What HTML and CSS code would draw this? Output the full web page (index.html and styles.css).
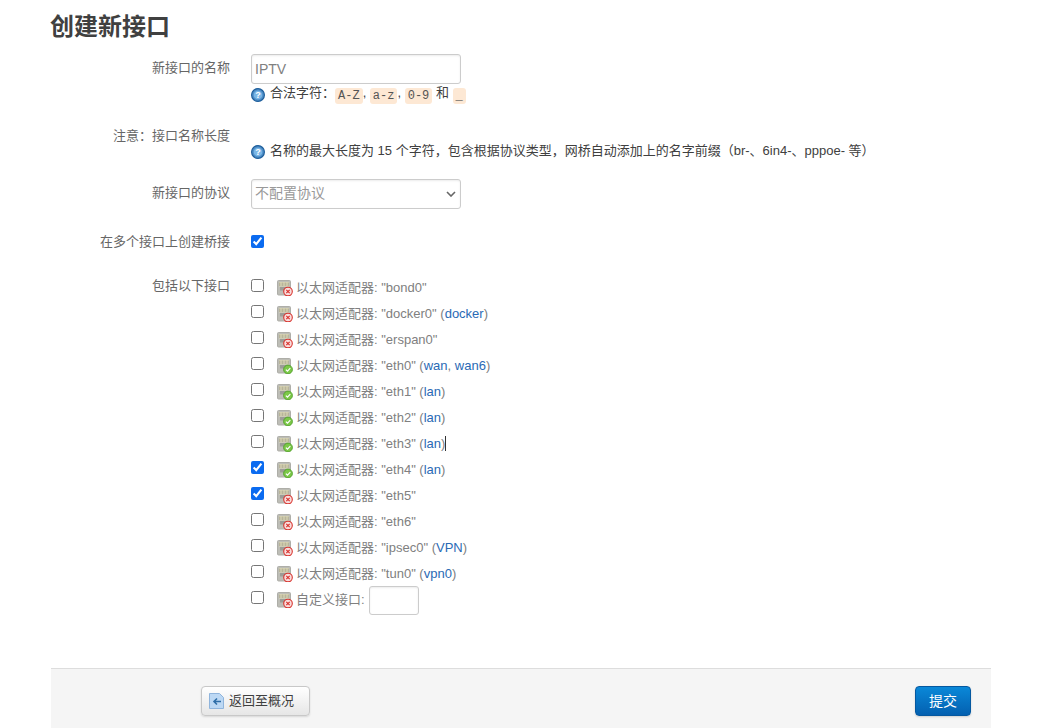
FILE: index.html
```html
<!DOCTYPE html>
<html lang="zh-CN">
<head>
<meta charset="utf-8">
<title>创建新接口</title>
<link rel="stylesheet" href="styles.css">
</head>
<body>
<svg class="defs" width="0" height="0" aria-hidden="true">
  <defs>
    <symbol id="port" viewBox="0 0 16 16">
      <rect x="0.5" y="0.5" width="13" height="14.500" rx="1" fill="#bdbdb6" stroke="#aeaea8"/>
      <rect x="2" y="2" width="10" height="4.500" fill="#dedab8"/>
      <path d="M2.500 2.500v3.500M4 2.500v3.500M5.500 2.500v3.500M7 2.500v3.500M8.500 2.500v3.500M10 2.500v3.500M11.500 2.500v3.500" stroke="#a8a48c" stroke-width=".7"/>
      <path d="M3 7h8v3.500H3z" fill="#9c9c96"/>
    </symbol>
    <symbol id="bad" viewBox="0 0 16 16">
      <use href="#port"/>
      <circle cx="11" cy="11.500" r="4.300" fill="#f9dcdc" stroke="#d9342e" stroke-width="1.100"/>
      <path d="M9.300 9.800l3.400 3.400M12.700 9.800l-3.400 3.400" stroke="#d9342e" stroke-width="1.100"/>
    </symbol>
    <symbol id="good" viewBox="0 0 16 16">
      <use href="#port"/>
      <circle cx="11" cy="11.500" r="4.400" fill="#7cc848" stroke="#4f9f28" stroke-width=".9"/>
      <path d="M8.900 11.600l1.600 1.600 2.800-3" fill="none" stroke="#fff" stroke-width="1.200"/>
    </symbol>
    <symbol id="help" viewBox="0 0 14 14">
      <circle cx="7" cy="7" r="6.400" fill="#4f8fc8" stroke="#1f5f9c" stroke-width="1.200"/>
      <circle cx="7" cy="7" r="4.300" fill="#7ab6e6"/>
      <text x="7" y="10" text-anchor="middle" font-size="9" font-family="Liberation Sans" font-weight="700" fill="#fff">?</text>
    </symbol>
  </defs>
</svg>

<main class="page">
  <h2 class="title">创建新接口</h2>
  <form class="form">
    <div class="row row-name">
      <label class="label">新接口的名称</label>
      <div class="field">
        <input class="control text-input" type="text" value="IPTV">
        <div class="help help-name">
          <svg class="help-icon"><use href="#help"/></svg>
          <span>合法字符：<code>A-Z</code>, <code>a-z</code>, <code>0-9</code> 和 <code>_</code></span>
        </div>
      </div>
    </div>

    <div class="row row-note">
      <label class="label">注意：接口名称长度</label>
      <div class="field">
        <div class="help help-note">
          <svg class="help-icon"><use href="#help"/></svg>
          <span>名称的最大长度为 15 个字符，包含根据协议类型，网桥自动添加上的名字前缀（br-、6in4-、pppoe- 等）</span>
        </div>
      </div>
    </div>

    <div class="row row-proto">
      <label class="label">新接口的协议</label>
      <div class="field">
        <div class="control select-box">
          <span>不配置协议</span>
          <svg class="chevron" viewBox="0 0 10 6"><path d="M1 1l4 4 4-4" fill="none" stroke="#666" stroke-width="1.600"/></svg>
        </div>
      </div>
    </div>

    <div class="row row-bridge">
      <label class="label">在多个接口上创建桥接</label>
      <div class="field"><input class="check" type="checkbox" checked></div>
    </div>

    <div class="row row-list">
      <label class="label">包括以下接口</label>
      <ul class="ifaces">
        <li class="iface"><input class="check" type="checkbox"><svg class="port"><use href="#bad"/></svg><span>以太网适配器: "bond0"</span></li>
        <li class="iface"><input class="check" type="checkbox"><svg class="port"><use href="#bad"/></svg><span>以太网适配器: "docker0" (<a>docker</a>)</span></li>
        <li class="iface"><input class="check" type="checkbox"><svg class="port"><use href="#bad"/></svg><span>以太网适配器: "erspan0"</span></li>
        <li class="iface"><input class="check" type="checkbox"><svg class="port"><use href="#good"/></svg><span>以太网适配器: "eth0" (<a>wan</a>, <a>wan6</a>)</span></li>
        <li class="iface"><input class="check" type="checkbox"><svg class="port"><use href="#good"/></svg><span>以太网适配器: "eth1" (<a>lan</a>)</span></li>
        <li class="iface"><input class="check" type="checkbox"><svg class="port"><use href="#good"/></svg><span>以太网适配器: "eth2" (<a>lan</a>)</span></li>
        <li class="iface"><input class="check" type="checkbox"><svg class="port"><use href="#good"/></svg><span>以太网适配器: "eth3" (<a>lan</a>)<i class="caret"></i></span></li>
        <li class="iface"><input class="check" type="checkbox" checked><svg class="port"><use href="#good"/></svg><span>以太网适配器: "eth4" (<a>lan</a>)</span></li>
        <li class="iface"><input class="check" type="checkbox" checked><svg class="port"><use href="#bad"/></svg><span>以太网适配器: "eth5"</span></li>
        <li class="iface"><input class="check" type="checkbox"><svg class="port"><use href="#bad"/></svg><span>以太网适配器: "eth6"</span></li>
        <li class="iface"><input class="check" type="checkbox"><svg class="port"><use href="#bad"/></svg><span>以太网适配器: "ipsec0" (<a>VPN</a>)</span></li>
        <li class="iface"><input class="check" type="checkbox"><svg class="port"><use href="#bad"/></svg><span>以太网适配器: "tun0" (<a>vpn0</a>)</span></li>
        <li class="iface"><input class="check" type="checkbox"><svg class="port"><use href="#bad"/></svg><span>自定义接口:</span><input class="control custom-input" type="text"></li>
      </ul>
    </div>
  </form>

  <footer class="actions">
    <button class="btn btn-back" type="button">
      <svg class="back-icon" viewBox="0 0 15 16">
        <path d="M.5.500h10l4 4v11H.500z" fill="#bcd8f4" stroke="#8fb4dc"/>
        <path d="M12 8.500H5M8 5.500l-3 3 3 3" fill="none" stroke="#2f6ea8" stroke-width="1.600"/>
      </svg>
      <span>返回至概况</span>
    </button>
    <button class="btn btn-submit" type="button">提交</button>
  </footer>
</main>
</body>
</html>
```

FILE: styles.css
```css
* { box-sizing: border-box; }

html, body { height: 100%; }

body {
  margin: 0;
  overflow: hidden;
  background: #fff;
  color: #404040;
  font-family: "Liberation Sans", "Noto Sans CJK SC", sans-serif;
  font-size: 13px;
  line-height: 18px;
}

.defs { position: absolute; }

.page {
  width: 940px;
  margin-left: 51px;
  display: flex;
  flex-direction: column;
  height: 728px;
}

.title {
  margin: 0 0 0 -1px;
  padding-top: 11px;
  height: 54px;
  font-size: 24px;
  line-height: 32px;
  font-weight: 700;
  color: #404040;
}

.form { flex: 1; }

.row {
  display: grid;
  grid-template-columns: 179px 1fr;
  column-gap: 21px;
}

.label {
  text-align: right;
  color: #666;
  line-height: 18px;
}

.field { min-width: 0; }

.control {
  border: 1px solid #ccc;
  border-radius: 3px;
  background: #fff;
  box-shadow: inset 0 1px 2px rgba(0, 0, 0, .08);
  color: #808080;
  font: inherit;
}

.text-input {
  display: block;
  width: 210px;
  height: 30px;
  padding: 0 3px;
  font-size: 14px;
  outline: none;
}

.help {
  display: flex;
  align-items: center;
  color: #404040;
  white-space: nowrap;
}

.help-icon {
  width: 14px;
  height: 14px;
  flex: none;
  margin-right: 5px;
  margin-top: 2px;
}

.help-name { height: 20px; }

code {
  display: inline-block;
  padding: 0 3px;
  background: #fde8d4;
  border-radius: 3px;
  color: #555;
  font-family: "Liberation Mono", monospace;
  font-size: 12px;
  line-height: 16px;
  vertical-align: -2px;
}

.row-name .label { padding-top: 5px; }
.row-name { height: 73px; }

.row-note { height: 52px; }
.help-note { padding-top: 13px; height: 34px; }

.row-proto { height: 54px; }
.row-proto .label { padding-top: 5px; }

.select-box {
  width: 210px;
  height: 30px;
  padding: 0 4px 2px 3px;
  display: flex;
  align-items: center;
  justify-content: space-between;
  font-size: 14px;
  color: #999;
}

.chevron { width: 10px; height: 6px; margin-top: 2px; }

.check {
  display: block;
  width: 13px;
  height: 13px;
  margin: 0;
  accent-color: #0b6bf0;
}

.row-bridge { height: 44px; }
.row-bridge .field { padding-top: 2px; }

.ifaces {
  list-style: none;
  margin: 0;
  padding: 0;
}

.iface {
  display: flex;
  align-items: flex-start;
  height: 26px;
  color: #808080;
  white-space: nowrap;
}

.iface .check { margin-top: 2px; margin-right: 13px; }

.port {
  width: 16px;
  height: 16px;
  flex: none;
  margin-top: 3px;
  margin-right: 3px;
}

.iface span { line-height: 18px; padding-top: 2px; height: 20px; }

.iface a { color: #2a6ab5; }

.caret {
  display: inline-block;
  width: 1px;
  height: 15px;
  background: #333;
  vertical-align: -3px;
}

.custom-input {
  width: 50px;
  height: 29px;
  margin-left: 4px;
  margin-top: -3px;
  outline: none;
}

.actions {
  flex: none;
  height: 60px;
  margin-top: auto;
  padding: 17px 20px 0 150px;
  display: flex;
  align-items: flex-start;
  justify-content: space-between;
  background: #f5f5f5;
  border-top: 1px solid #ddd;
}

.btn {
  height: 30px;
  border-radius: 4px;
  font: inherit;
  font-size: 14px;
  line-height: 18px;
}

.btn-back {
  width: 109px;
  padding: 0 0 0 7px;
  display: flex;
  align-items: center;
  gap: 5px;
  font-size: 13px;
  color: #404040;
  background: linear-gradient(#ffffff, #e6e6e6);
  border: 1px solid #c8c8c8;
  box-shadow: 0 1px 2px rgba(0, 0, 0, .12);
}

.back-icon { width: 15px; height: 16px; flex: none; }

.btn-submit {
  width: 56px;
  padding: 0;
  color: #fff;
  background: linear-gradient(#0a88d8, #0460b0);
  border: 1px solid #0558a0;
  box-shadow: 0 1px 2px rgba(0, 0, 0, .15);
}
```
